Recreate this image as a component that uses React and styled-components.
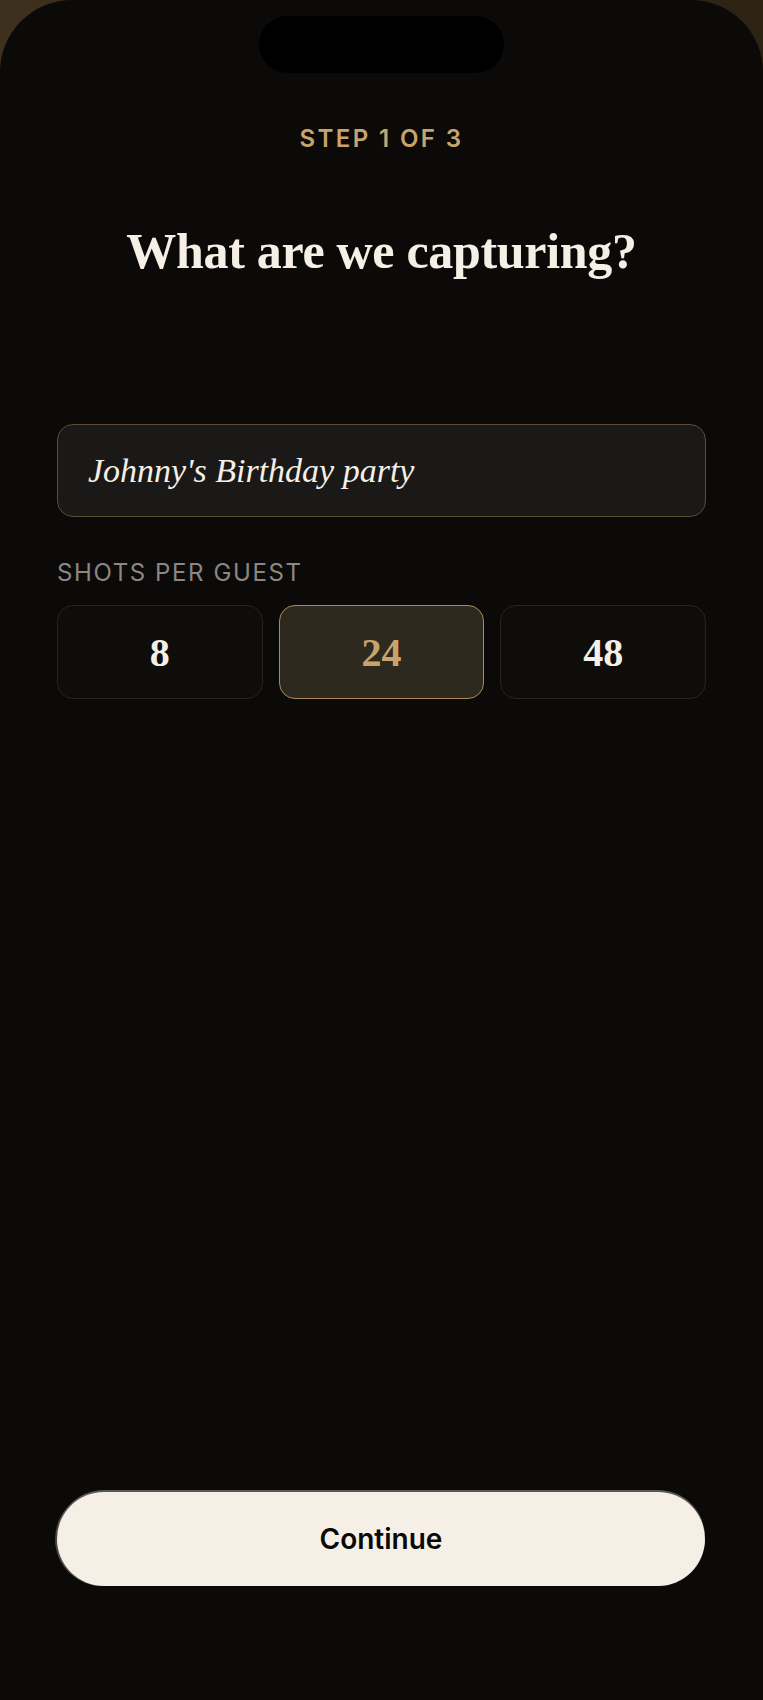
import React, { useState } from "react";
import styled, { createGlobalStyle } from "styled-components";

const Global = createGlobalStyle`
  html, body {
    margin: 0;
    padding: 0;
    background: linear-gradient(90deg, #3d301c 0%, #2c2315 100%);
  }
  * { box-sizing: border-box; }
`;

const Phone = styled.div`
  width: 763px;
  height: 1700px;
  background: #0b0a09;
  border-radius: 72px 72px 0 0;
  display: flex;
  flex-direction: column;
  align-items: stretch;
  padding: 16px 57px 114px;
`;

const Island = styled.div`
  align-self: center;
  width: 245px;
  height: 57px;
  border-radius: 29px;
  background: #000;
  flex-shrink: 0;
`;

const Step = styled.div`
  margin-top: 54px;
  font-family: Inter, "Liberation Sans", sans-serif;
  font-size: 24px;
  line-height: 24px;
  font-weight: 600;
  letter-spacing: 2.4px;
  color: #c8a46c;
  text-align: center;
`;

const Title = styled.h1`
  margin: 75px 0 0;
  font-family: "Liberation Serif", "DejaVu Serif", serif;
  font-size: 50px;
  line-height: 50px;
  font-weight: 700;
  color: #f5efe6;
  text-align: center;
  letter-spacing: -0.3px;
`;

const NameField = styled.div`
  margin-top: 148px;
  height: 93px;
  border: 1px solid #5b4c34;
  border-radius: 16px;
  background: #1a1918;
  display: flex;
  align-items: center;
  padding: 0 30px;
  font-family: "Liberation Serif", "DejaVu Serif", serif;
  font-style: italic;
  font-size: 34px;
  color: #f5efe6;
`;

const Label = styled.div`
  margin-top: 44px;
  font-family: Inter, "Liberation Sans", sans-serif;
  font-size: 24px;
  line-height: 24px;
  font-weight: 400;
  letter-spacing: 1.6px;
  color: #8b8783;
`;

const Options = styled.div`
  margin-top: 20px;
  display: grid;
  grid-template-columns: repeat(3, 1fr);
  gap: 16px;
`;

const Option = styled.button`
  height: 94px;
  border-radius: 16px;
  border: 1px solid ${(p) => (p.$active ? "#a98a58" : "#272523")};
  background: ${(p) => (p.$active ? "#2e291f" : "#0e0d0c")};
  color: ${(p) => (p.$active ? "#c8a46c" : "#f5efe6")};
  font-family: "Liberation Serif", "DejaVu Serif", serif;
  font-weight: 700;
  font-size: 40px;
  display: flex;
  align-items: center;
  justify-content: center;
  padding: 0;
  cursor: pointer;
`;

const ContinueButton = styled.button`
  margin-top: auto;
  height: 94px;
  width: 648px;
  border: none;
  border-radius: 47px;
  background: #f5efe6;
  box-shadow: 0 -2px 0 0 #5a5754, -2px 0 0 0 #4a4745;
  font-family: Inter, "Liberation Sans", sans-serif;
  font-size: 28px;
  font-weight: 600;
  color: #0b0a09;
  cursor: pointer;
`;

export default function App() {
  const [shots, setShots] = useState(24);
  return (
    <>
      <Global />
      <Phone>
        <Island />
        <Step>STEP 1 OF 3</Step>
        <Title>What are we capturing?</Title>
        <NameField>Johnny's Birthday party</NameField>
        <Label>SHOTS PER GUEST</Label>
        <Options>
          {[8, 24, 48].map((n) => (
            <Option key={n} $active={shots === n} onClick={() => setShots(n)}>
              {n}
            </Option>
          ))}
        </Options>
        <ContinueButton>Continue</ContinueButton>
      </Phone>
    </>
  );
}
